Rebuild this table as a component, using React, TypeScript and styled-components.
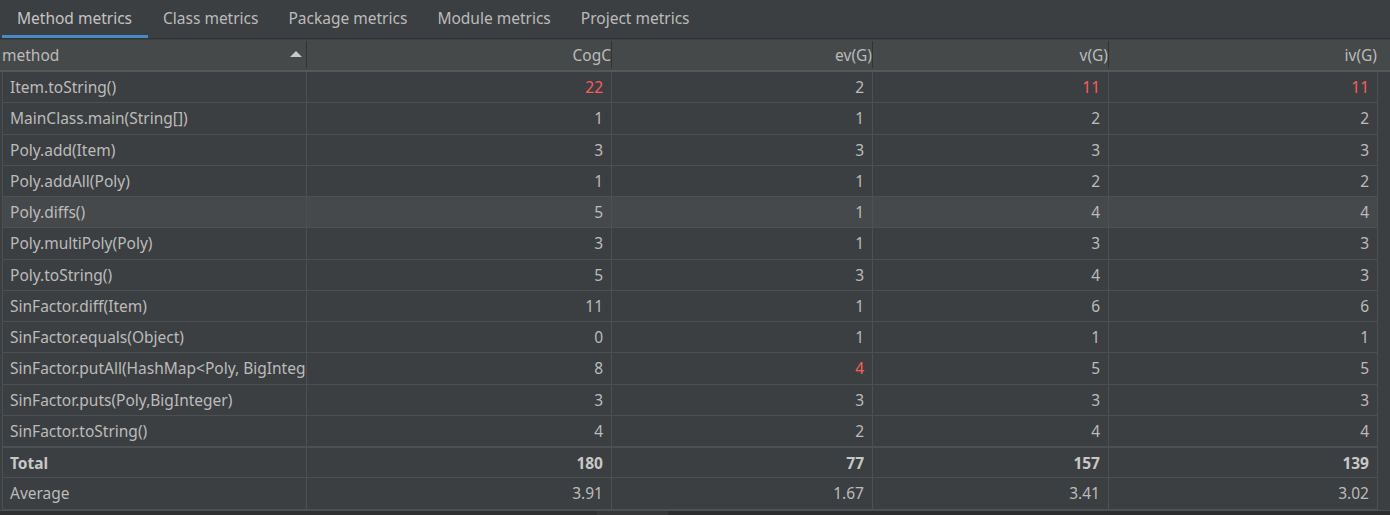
import React from "react";
import styled, { createGlobalStyle } from "styled-components";

const Global = createGlobalStyle`
  html, body { margin: 0; padding: 0; background: #3c3f41; }
  body { font-family: "Noto Sans", "Open Sans", sans-serif; color: #bbbbbb; overflow: hidden; }
`;

const Page = styled.div`
  width: 1390px;
  height: 515px;
  display: flex;
  flex-direction: column;
  background: #3c3f41;
`;

const TabBar = styled.div`
  display: flex;
  height: 39px;
  padding-left: 2px;
  border-bottom: 1px solid #323232;
  box-sizing: border-box;
`;

const Tab = styled.div<{ $active?: boolean }>`
  display: flex;
  align-items: center;
  padding: 0 15px 3px;
  font-size: 15.5px;
  color: ${(p) => (p.$active ? "#c4c4c4" : "#bbbbbb")};
  box-shadow: ${(p) => (p.$active ? "inset 0 -3px 0 #4a88c7" : "none")};
  &:first-child { padding: 0 16px 3px 15px; }
`;

const Table = styled.div`
  display: flex;
  flex-direction: column;
  padding-left: 2px;
  padding-top: 1px;
`;

const COLS = "305px 305px 261px 236px 268px";

const HeaderRow = styled.div`
  display: grid;
  grid-template-columns: ${COLS} 1fr;
  height: 30px;
  background: #45494a;
  margin-left: -2px;
  padding-left: 2px;
  border-bottom: 2px solid #55585a;
`;

const HeaderCell = styled.div<{ $align?: "left" | "right"; $last?: boolean }>`
  position: relative;
  display: flex;
  align-items: center;
  justify-content: ${(p) => (p.$align === "left" ? "flex-start" : "flex-end")};
  font-size: 15.5px;
  color: #bbbbbb;
  overflow: hidden;
  white-space: nowrap;
  border-right: ${(p) => (p.$last ? "none" : "1px solid #323232")};
  margin: 1px 0 2px;
`;

const HeaderCellTail = styled.div`
  background: #45494a;
`;

const SortArrow = styled.span`
  position: absolute;
  right: 4px;
  top: 10px;
  width: 0;
  height: 0;
  border-left: 6px solid transparent;
  border-right: 6px solid transparent;
  border-bottom: 6px solid #c8c8c8;
`;

const Body = styled.div`
  display: flex;
  flex-direction: column;
  width: 1376px;
  border-left: 1px solid #4d5052;
  border-right: 1px solid #4d5052;
  box-sizing: border-box;
`;

const Row = styled.div<{ $hover?: boolean; $thickTop?: boolean }>`
  display: grid;
  grid-template-columns: 304px 305px 261px 236px 1fr;
  height: 31.25px;
  box-sizing: border-box;
  background: ${(p) => (p.$hover ? "#46494b" : "#3c3f41")};
  border-bottom: 1px solid #4d5052;
  ${(p) => (p.$thickTop ? "border-top: 1px solid #4d5052;" : "")}
`;

const Cell = styled.div<{ $num?: boolean; $red?: boolean; $bold?: boolean }>`
  display: flex;
  align-items: center;
  justify-content: ${(p) => (p.$num ? "flex-end" : "flex-start")};
  padding: ${(p) => (p.$num ? "0 8px 0 0" : "0 0 0 7px")};
  font-size: 15.5px;
  font-weight: ${(p) => (p.$bold ? 700 : 400)};
  color: ${(p) => (p.$red ? "#ff5b5b" : p.$bold ? "#c8c8c8" : "#bbbbbb")};
  white-space: nowrap;
  overflow: hidden;
  border-right: 1px solid #4d5052;
  &:last-child { border-right: none; }
`;

const BottomStrip = styled.div`
  flex: 1;
  display: flex;
  background: #2e3032;
  border-top: 1px solid #4d5052;
`;

const StripPiece = styled.div<{ $w: number; $bg: string }>`
  width: ${(p) => p.$w}px;
  background: ${(p) => p.$bg};
`;

type R = { name: string; v: (number | string)[]; red?: number[] };

const rows: R[] = [
  { name: "Item.toString()", v: [22, 2, 11, 11], red: [0, 2, 3] },
  { name: "MainClass.main(String[])", v: [1, 1, 2, 2] },
  { name: "Poly.add(Item)", v: [3, 3, 3, 3] },
  { name: "Poly.addAll(Poly)", v: [1, 1, 2, 2] },
  { name: "Poly.diffs()", v: [5, 1, 4, 4] },
  { name: "Poly.multiPoly(Poly)", v: [3, 1, 3, 3] },
  { name: "Poly.toString()", v: [5, 3, 4, 3] },
  { name: "SinFactor.diff(Item)", v: [11, 1, 6, 6] },
  { name: "SinFactor.equals(Object)", v: [0, 1, 1, 1] },
  { name: "SinFactor.putAll(HashMap<Poly, BigInteger>)", v: [8, 4, 5, 5], red: [1] },
  { name: "SinFactor.puts(Poly,BigInteger)", v: [3, 3, 3, 3] },
  { name: "SinFactor.toString()", v: [4, 2, 4, 4] },
];

const tabs = ["Method metrics", "Class metrics", "Package metrics", "Module metrics", "Project metrics"];

export default function App() {
  return (
    <Page>
      <Global />
      <TabBar>
        {tabs.map((t, i) => (
          <Tab key={t} $active={i === 0}>
            {t}
          </Tab>
        ))}
      </TabBar>
      <Table>
        <HeaderRow>
          <HeaderCell $align="left">
            method
            <SortArrow />
          </HeaderCell>
          <HeaderCell>CogC</HeaderCell>
          <HeaderCell>ev(G)</HeaderCell>
          <HeaderCell>v(G)</HeaderCell>
          <HeaderCell $last>iv(G)</HeaderCell>
          <HeaderCellTail />
        </HeaderRow>
        <Body>
          {rows.map((r) => (
            <Row key={r.name} $hover={r.name === "Poly.diffs()"}>
              <Cell>{r.name}</Cell>
              {r.v.map((x, i) => (
                <Cell key={i} $num $red={r.red?.includes(i)}>
                  {x}
                </Cell>
              ))}
            </Row>
          ))}
          <Row $thickTop>
            <Cell $bold>Total</Cell>
            {[180, 77, 157, 139].map((x, i) => (
              <Cell key={i} $num $bold>
                {x}
              </Cell>
            ))}
          </Row>
          <Row>
            <Cell>Average</Cell>
            {["3.91", "1.67", "3.41", "3.02"].map((x, i) => (
              <Cell key={i} $num>
                {x}
              </Cell>
            ))}
          </Row>
        </Body>
      </Table>
      <BottomStrip>
        <StripPiece $w={597} $bg="#2e3032" />
        <StripPiece $w={71} $bg="#353739" />
        <StripPiece $w={722} $bg="#2b2d2f" />
      </BottomStrip>
    </Page>
  );
}
